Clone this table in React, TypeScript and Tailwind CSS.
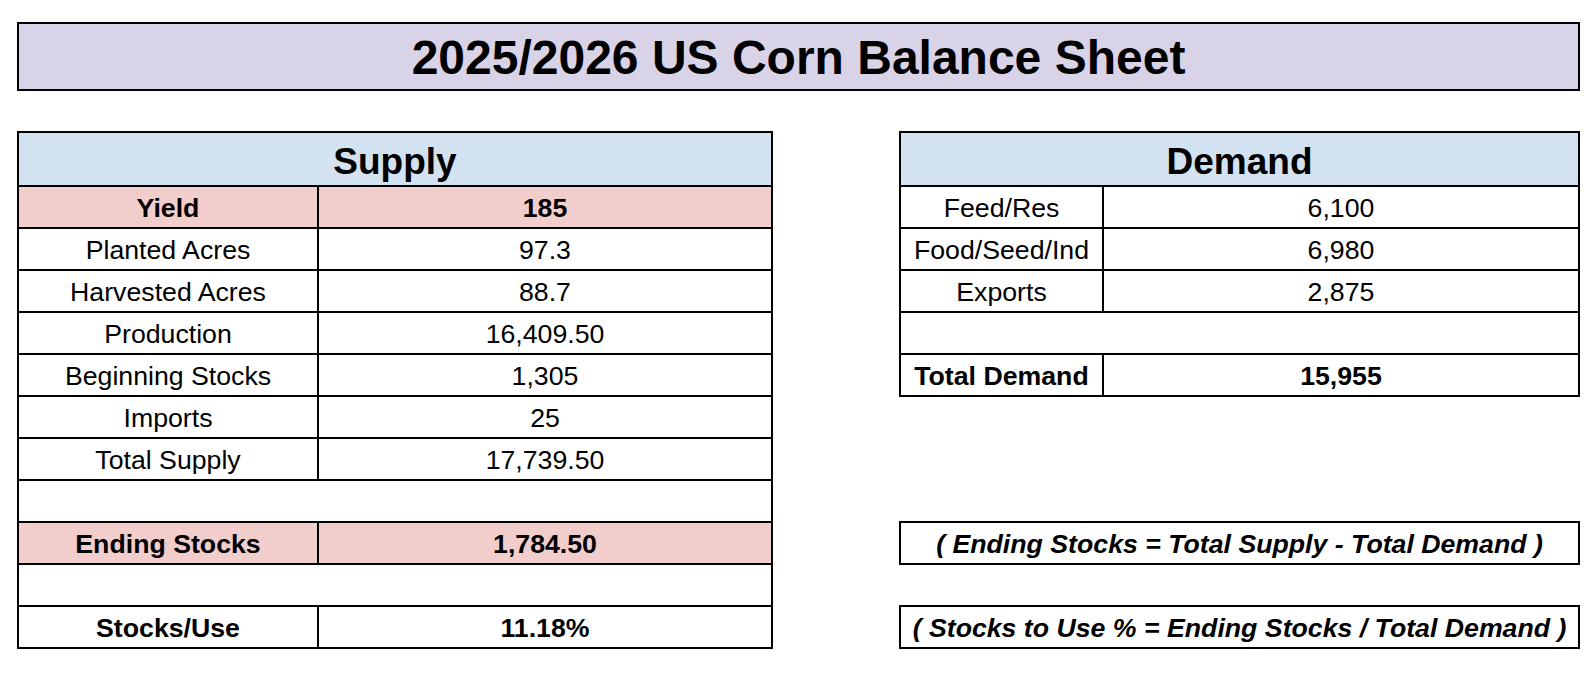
const supplyRows: { label: string; value: string; kind: "pink" | "plain" | "blank" | "bold" }[] = [
  { label: "Yield", value: "185", kind: "pink" },
  { label: "Planted Acres", value: "97.3", kind: "plain" },
  { label: "Harvested Acres", value: "88.7", kind: "plain" },
  { label: "Production", value: "16,409.50", kind: "plain" },
  { label: "Beginning Stocks", value: "1,305", kind: "plain" },
  { label: "Imports", value: "25", kind: "plain" },
  { label: "Total Supply", value: "17,739.50", kind: "plain" },
  { label: "", value: "", kind: "blank" },
  { label: "Ending Stocks", value: "1,784.50", kind: "pink" },
  { label: "", value: "", kind: "blank" },
  { label: "Stocks/Use", value: "11.18%", kind: "bold" },
];

const demandRows: { label: string; value: string; kind: "plain" | "blank" | "bold" }[] = [
  { label: "Feed/Res", value: "6,100", kind: "plain" },
  { label: "Food/Seed/Ind", value: "6,980", kind: "plain" },
  { label: "Exports", value: "2,875", kind: "plain" },
  { label: "", value: "", kind: "blank" },
  { label: "Total Demand", value: "15,955", kind: "bold" },
];

const Row = ({
  label,
  value,
  kind,
  labelWidth,
}: {
  label: string;
  value: string;
  kind: string;
  labelWidth: string;
}) => {
  if (kind === "blank") {
    return <div className="h-[42px] border-t-2 border-black bg-white" />;
  }
  const bg = kind === "pink" ? "bg-[#f1cdcc]" : "bg-white";
  const weight = kind === "plain" ? "font-normal" : "font-bold";
  return (
    <div className={`flex h-[42px] border-t-2 border-black ${bg} ${weight}`}>
      <div className={`${labelWidth} flex items-center justify-center border-r-2 border-black pt-[3px]`}>
        {label}
      </div>
      <div className="flex flex-1 items-center justify-center pt-[3px]">{value}</div>
    </div>
  );
};

const Formula = ({ text }: { text: string }) => (
  <div className="flex h-[44px] items-center justify-center border-2 border-black bg-white pt-[3px] font-bold italic">
    {text}
  </div>
);

export default function App() {
  return (
    <div
      className="min-h-[676px] w-[1594px] bg-white pl-[17px] pt-[22px] text-[26.7px] leading-none text-black"
      style={{ fontFamily: '"Liberation Sans", Arial, sans-serif' }}
    >
      <div className="w-[1563px]">
        {/* title */}
        <div className="flex h-[69px] items-center justify-center border-2 border-black bg-[#d9d3e8] pt-[2px] text-[48px] font-bold">
          2025/2026 US Corn Balance Sheet
        </div>

        <div className="mt-[40px] flex items-start justify-between">
          {/* supply */}
          <div className="w-[756px] border-2 border-black">
            <div className="flex h-[52px] items-center justify-center bg-[#d3e2f1] pt-[4px] text-[37px] font-bold">
              Supply
            </div>
            {supplyRows.map((r, i) => (
              <Row key={i} label={r.label} value={r.value} kind={r.kind} labelWidth="w-[300px]" />
            ))}
          </div>

          {/* demand + formulas */}
          <div className="flex w-[681px] flex-col">
            <div className="border-2 border-black">
              <div className="flex h-[52px] items-center justify-center bg-[#d3e2f1] pt-[4px] text-[37px] font-bold">
                Demand
              </div>
              {demandRows.map((r, i) => (
                <Row key={i} label={r.label} value={r.value} kind={r.kind} labelWidth="w-[203px]" />
              ))}
            </div>
            <div className="mt-[124px]">
              <Formula text="( Ending Stocks = Total Supply - Total Demand )" />
            </div>
            <div className="mt-[40px]">
              <Formula text="( Stocks to Use % = Ending Stocks / Total Demand )" />
            </div>
          </div>
        </div>
      </div>
    </div>
  );
}
